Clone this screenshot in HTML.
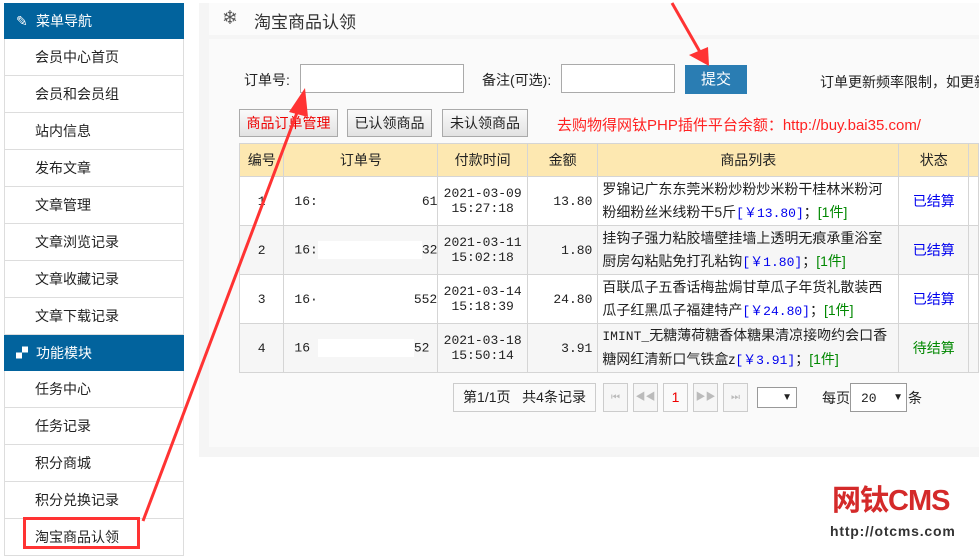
<!DOCTYPE html>
<html><head><meta charset="utf-8"><style>
*{margin:0;padding:0;box-sizing:border-box}
body{width:979px;height:550px;overflow:hidden;background:#fff;font-family:"Liberation Sans","Noto Sans CJK SC",sans-serif;font-size:14px;color:#222;position:relative}
.a{position:absolute}
.side{left:4px;top:3px;width:180px}
.hd{height:36px;background:#02639d;color:#fff;font-size:14px;line-height:36px;padding-left:32px;position:relative}
.it{height:37px;border-bottom:1px solid #ddd;border-left:1px solid #ddd;border-right:1px solid #ddd;line-height:36px;padding-left:30px;font-size:14px}
.btn{position:absolute;top:109px;height:28px;border:1px solid #aaa;background:linear-gradient(#fafafa,#e2e2e2);line-height:26px;text-align:center;font-size:14px}
table{border-collapse:collapse;position:absolute;left:239px;top:143px;font-size:14px}
td,th{border:1px solid #d5d5d5;text-align:center;font-weight:normal}
th{background:#fde8b1;height:33px}
td{height:49px}
.m{font-family:"Liberation Mono","Noto Sans CJK SC",monospace;font-size:13px}
.pb{position:absolute;top:383px;height:29px;border:1px solid #ccc;background:#f6f6f6;text-align:center;line-height:27px;color:#bbb;font-size:10px}
</style></head><body>
<div class="a side">
<div class="hd"><span style="position:absolute;left:12px">✎</span>菜单导航</div>
<div class="it">会员中心首页</div><div class="it">会员和会员组</div><div class="it">站内信息</div><div class="it">发布文章</div><div class="it">文章管理</div><div class="it">文章浏览记录</div><div class="it">文章收藏记录</div><div class="it">文章下载记录</div>
<div class="hd"><span style="position:absolute;left:12px;font-size:12px">▞</span>功能模块</div>
<div class="it">任务中心</div><div class="it">任务记录</div><div class="it">积分商城</div><div class="it">积分兑换记录</div><div class="it">淘宝商品认领</div>
</div>
<div class="a" style="left:199px;top:3px;width:780px;height:454px;background:#f5f5f5"></div>
<div class="a" style="left:209px;top:3px;width:770px;height:32px;background:#fbfbfb"></div>
<div class="a" style="left:222px;top:7px;font-size:19px;color:#555">❄</div>
<div class="a" style="left:254px;top:8px;font-size:17px;color:#333">淘宝商品认领</div>
<div class="a" style="left:209px;top:39px;width:770px;height:408px;background:#fafafa"></div>
<div class="a" style="left:244px;top:70px">订单号:</div>
<div class="a" style="left:300px;top:64px;width:164px;height:29px;border:1px solid #aaa;background:#fff"></div>
<div class="a" style="left:482px;top:70px">备注(可选):</div>
<div class="a" style="left:561px;top:64px;width:114px;height:29px;border:1px solid #aaa;background:#fff"></div>
<div class="a" style="left:685px;top:65px;width:62px;height:29px;background:#2a7db3;color:#fff;text-align:center;line-height:29px;font-size:15px">提交</div>
<div class="a" style="left:820px;top:72px;white-space:nowrap">订单更新频率限制，如更新</div>
<div class="btn" style="left:239px;width:99px;color:#e00">商品订单管理</div>
<div class="btn" style="left:347px;width:85px">已认领商品</div>
<div class="btn" style="left:442px;width:86px">未认领商品</div>
<div class="a" style="left:557px;top:114px;color:#f22;font-size:15px;white-space:nowrap">去购物得网钛PHP插件平台余额：http://buy.bai35.com/</div>
<table>
<tr><th style="width:45px">编号</th><th style="width:153px">订单号</th><th style="width:90px">付款时间</th><th style="width:71px">金额</th><th style="width:305px">商品列表</th><th style="width:71px">状态</th><th style="width:10px"></th></tr>
<tr style="background:#fff"><td class="m">1</td><td class="m" style="text-align:left;padding-left:10px;white-space:nowrap">16:<span style="display:inline-block;width:104px"></span>61</td><td class="m">2021-03-09<br>15:27:18</td><td class="m" style="text-align:right;padding-right:5px">13.80</td><td style="text-align:left;padding:0 10px 0 4px;line-height:23px">罗锦记广东东莞米粉炒粉炒米粉干桂林米粉河粉细粉丝米线粉干5斤<span style="color:#00e" class="m">[￥13.80]</span>；<span style="color:#080">[1件]</span></td><td style="color:#00e">已结算</td><td></td></tr>
<tr style="background:#f6f6f6"><td class="m">2</td><td class="m" style="text-align:left;padding-left:10px;white-space:nowrap">16:<span style="display:inline-block;width:104px;height:18px;background:#fff;vertical-align:middle"></span>32</td><td class="m">2021-03-11<br>15:02:18</td><td class="m" style="text-align:right;padding-right:5px">1.80</td><td style="text-align:left;padding:0 10px 0 4px;line-height:23px">挂钩子强力粘胶墙壁挂墙上透明无痕承重浴室厨房勾粘贴免打孔粘钩<span style="color:#00e" class="m">[￥1.80]</span>；<span style="color:#080">[1件]</span></td><td style="color:#00e">已结算</td><td></td></tr>
<tr style="background:#fff"><td class="m">3</td><td class="m" style="text-align:left;padding-left:10px;white-space:nowrap">16·<span style="display:inline-block;width:96px"></span>552</td><td class="m">2021-03-14<br>15:18:39</td><td class="m" style="text-align:right;padding-right:5px">24.80</td><td style="text-align:left;padding:0 10px 0 4px;line-height:23px">百联瓜子五香话梅盐焗甘草瓜子年货礼散装西瓜子红黑瓜子福建特产<span style="color:#00e" class="m">[￥24.80]</span>；<span style="color:#080">[1件]</span></td><td style="color:#00e">已结算</td><td></td></tr>
<tr style="background:#f6f6f6"><td class="m">4</td><td class="m" style="text-align:left;padding-left:10px;white-space:nowrap">16 <span style="display:inline-block;width:96px;height:18px;background:#fff;vertical-align:middle"></span>52</td><td class="m">2021-03-18<br>15:50:14</td><td class="m" style="text-align:right;padding-right:5px">3.91</td><td style="text-align:left;padding:0 10px 0 4px;line-height:23px"><span class="m">IMINT_</span>无糖薄荷糖香体糖果清凉接吻约会口香糖网红清新口气铁盒z<span style="color:#00e" class="m">[￥3.91]</span>；<span style="color:#080">[1件]</span></td><td style="color:#080">待结算</td><td></td></tr>
</table>
<div class="pb" style="left:453px;width:143px;color:#222;font-size:14px;background:#fafafa">第1/1页&nbsp;&nbsp; 共4条记录</div>
<div class="pb" style="left:603px;width:25px">⏮</div>
<div class="pb" style="left:633px;width:25px">◀◀</div>
<div class="pb" style="left:663px;width:25px;color:#e00;font-size:14px;background:#fafafa">1</div>
<div class="pb" style="left:693px;width:25px">▶▶</div>
<div class="pb" style="left:723px;width:25px">⏭</div>
<div class="a" style="left:757px;top:387px;width:40px;height:21px;border:1px solid #999;background:#fff;font-size:10px;text-align:right;padding-right:4px;line-height:19px">▼</div>
<div class="a" style="left:822px;top:388px">每页</div>
<div class="a" style="left:850px;top:383px;width:57px;height:29px;border:1px solid #999;background:#fff;line-height:27px;padding-left:10px"><span class="m">20</span><span style="float:right;font-size:10px;padding-right:3px">▼</span></div>
<div class="a" style="left:908px;top:388px">条</div>
<div class="a" style="left:832px;top:484px;font-size:29px;line-height:34px;font-weight:bold;color:#d42a2a;letter-spacing:-1px;white-space:nowrap">网钛CMS</div>
<div class="a" style="left:830px;top:523px;font-size:14px;font-weight:bold;color:#333;letter-spacing:0.8px">http://otcms.com</div>
<div class="a" style="left:23px;top:517px;width:117px;height:32px;border:3px solid #f33"></div>
<svg class="a" style="left:0;top:0" width="979" height="550">
<line x1="143" y1="521" x2="298" y2="110" stroke="#f33" stroke-width="3"/>
<polygon points="305,88 289,112 308,117" fill="#f33"/>
<line x1="672" y1="3" x2="700" y2="52" stroke="#f33" stroke-width="3"/>
<polygon points="709,66 689,55 708,47" fill="#f33"/>
</svg>
</body></html>
